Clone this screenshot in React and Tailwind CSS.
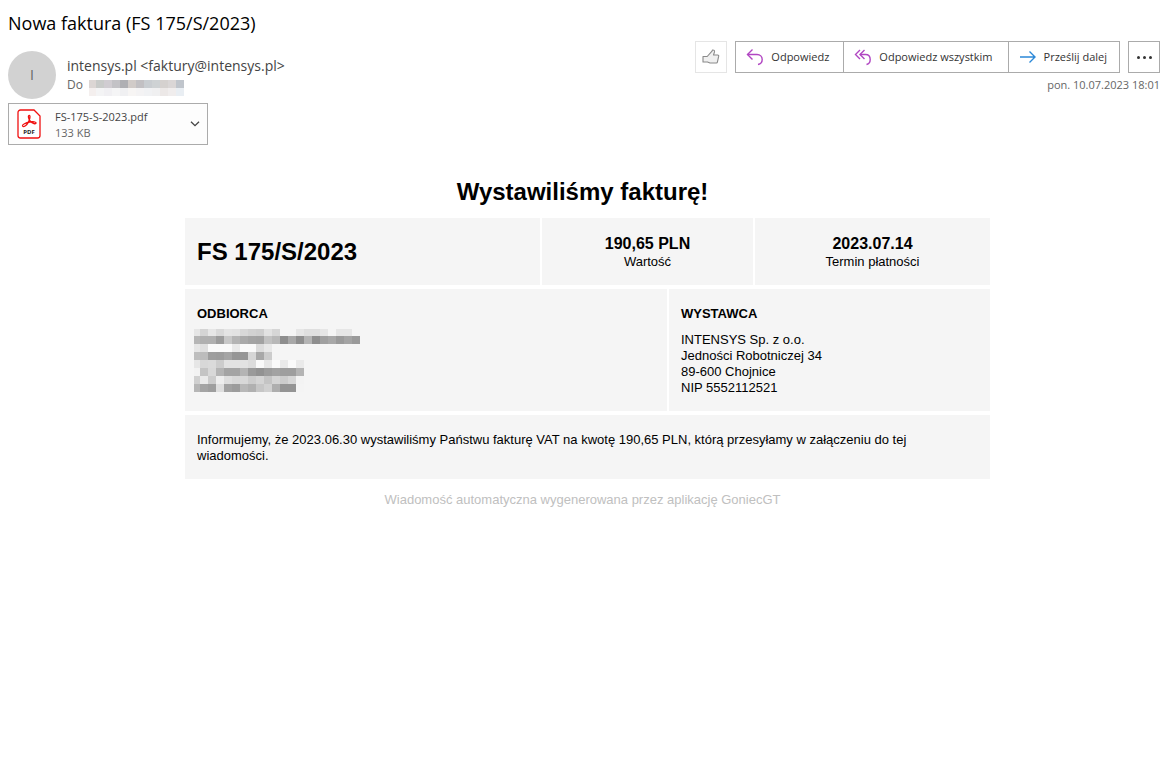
const SEGOE = "font-['Open_Sans','Noto_Sans',sans-serif]";
const ARIAL = "font-['Liberation_Sans',Arial,sans-serif]";

const SELLER = ['INTENSYS Sp. z o.o.', 'Jedności Robotniczej 34', '89-600 Chojnice', 'NIP 5552112521'];

// Blurred-out personal data: one string per row, two hex digits of grey per cell, ".." is empty.
const BUYER_MASK = [
  'e6d4e6d9e4e2d8d2cfe2d6....e6dfdfe6..e6e6..',
  'b6b0b09cc8b4aaa4a2c2b88ea88eb48ea0a89aa49a',
  'e6dffafafaeafafadce8......................',
  'bebc9e9ca49696d6a8cc......................',
  'e6d8dacce2e2e2dcfae8faeafaea..............',
  'f2c4d8b4a4a4b49a929ca29e9eb4..............',
  'd0eacceeded8d8ccd4c4d4ccd6f3..............',
  'b6a49edea29cb8b0c6d0ae9494f4..............',
];

const ADDRESS_MASK = [
  ['#dcd6d4', '#c9cbc9', '#d0ccd1', '#c3c2c6', '#afafb3', '#d1cbc8', '#c2c0c3', '#c9cdd1', '#ced2d4', '#d5d1cf', '#dad6d6', '#c0c5cc'],
  ['#f4efee', '#f4f4f5', '#f1f0f3', '#f5f5f6', '#f0f0f2', '#f7f5f4', '#f4f3f4', '#f1f2f4', '#f0f0f1', '#ece8e7', '#f0eded', '#e9eef3'],
];

function BuyerMask() {
  return (
    <svg width="168" height="63" viewBox="2 1 168 63" role="img" aria-label="Dane odbiorcy ukryte" shapeRendering="crispEdges">
      {BUYER_MASK.map((row, y) =>
        row.match(/../g).map((v, x) =>
          v === '..' ? null : (
            <rect key={`${x}-${y}`} x={x * 8} y={y * 8} width="8" height="8" fill={`#${v}${v}${v}`} />
          )
        )
      )}
    </svg>
  );
}

function AddressMask() {
  return (
    <svg width="95" height="16" viewBox="1 0 95 16" role="img" aria-label="Adres ukryty" shapeRendering="crispEdges">
      {ADDRESS_MASK.map((row, y) =>
        row.map((c, x) => <rect key={`${x}-${y}`} x={x * 8} y={y * 8} width="8" height="8" fill={c} />)
      )}
    </svg>
  );
}

function LikeIcon() {
  return (
    <svg width="18" height="18" viewBox="0 0 18 18" fill="#f0f0f0" stroke="#8a8a8a" strokeWidth="1.1" strokeLinejoin="round">
      <path d="M1 8.500h4.200L10 3.200l.5-1.200c1.500-.2 2.300.6 2 1.900l-1 3.100h4.200c.8 0 1.100.5 1 1.200l-1.300 6c-.1.500-.5.800-1 .8H8l-2.500-1H1z" />
    </svg>
  );
}

function ReplyIcon() {
  return (
    <svg width="18" height="18" viewBox="0 0 18 18" fill="none" stroke="#b146c2" strokeWidth="1.4">
      <path d="M6.5 1.5 1.5 6.5l5 5" />
      <path d="M1.500 6.500H11c3.200 0 5.200 2.200 5.200 5 0 2.500-1.600 4.500-4.200 5" />
    </svg>
  );
}

function ReplyAllIcon() {
  return (
    <svg width="18" height="18" viewBox="0 0 18 18" fill="none" stroke="#b146c2" strokeWidth="1.4">
      <path d="M6 2 1.500 6.500 6 11" />
      <path d="M10.500 2 6 6.500l4.500 4.500" />
      <path d="M6 6.500h5.500c2.900 0 4.700 2.200 4.700 5 0 2.500-1.400 4.500-3.700 5" />
    </svg>
  );
}

function ForwardIcon() {
  return (
    <svg width="18" height="18" viewBox="0 0 18 18" fill="none" stroke="#2b88d8" strokeWidth="1.4">
      <path d="M1 9h15M10.500 3.500 16 9l-5.500 5.500" />
    </svg>
  );
}

function PdfIcon() {
  return (
    <svg width="24" height="30" viewBox="0 0 24 30" fill="none">
      <path d="M3.500 1H17l6 6v19.500a2.500 2.500 0 0 1-2.500 2.500h-17A2.500 2.500 0 0 1 1 26.500v-23A2.500 2.500 0 0 1 3.500 1z" fill="#fff" stroke="#f01010" strokeWidth="1.3" />
      <path
        d="M5.600 17c-.8-1.400 3.400-3.300 7-4 3.500-.6 6.600-.3 6.500 1-.1 1.600-3.700.4-5.800-1.700-1.700-1.700-2.600-5.800-1.200-6 1.600-.2.800 4.300-1.100 7.600C9.400 16.600 6.600 18.600 5.600 17z"
        stroke="#f01010"
        strokeWidth="1.3"
      />
      <text x="12" y="25" textAnchor="middle" fontSize="6" fontWeight="700" fontFamily="Open Sans, sans-serif" fill="#222">PDF</text>
    </svg>
  );
}

function MailHeader() {
  return (
    <header className={`${SEGOE} pr-[7px]`}>
      <h1 className="text-lg leading-6 text-black pt-[11px]">Nowa faktura (FS 175/S/2023)</h1>

      <div className="flex justify-between items-start pt-1.5">
        <div className="flex items-center gap-[11px] pt-2.5">
          <div className="size-12 rounded-full bg-[#d2d2d2] text-[#666] text-sm flex items-center justify-center">I</div>
          <div>
            <p className="text-sm leading-5 text-[#444]">intensys.pl &lt;faktury@intensys.pl&gt;</p>
            <div className="flex items-start gap-1.5 h-[18px] text-xs leading-[18px] text-[#666]">
              <span>Do</span>
              <span className="pt-1">
                <AddressMask />
              </span>
            </div>
          </div>
        </div>

        <div>
          <div className="flex text-[11px] text-[#333]">
            <button type="button" aria-label="Lubię to" className="size-8 mr-2 border border-[#e5e5e5] flex items-center justify-center">
              <LikeIcon />
            </button>
            <button type="button" className="h-8 border border-[#ababab] pl-2.5 pr-3.5 flex items-center gap-[7px]">
              <ReplyIcon />
              Odpowiedz
            </button>
            <button type="button" className="h-8 border-y border-[#ababab] pl-2.5 pr-[15px] flex items-center gap-[7px]">
              <ReplyAllIcon />
              Odpowiedz wszystkim
            </button>
            <button type="button" className="h-8 border border-[#ababab] pl-2.5 pr-3 flex items-center gap-[7px]">
              <ForwardIcon />
              Prześlij dalej
            </button>
            <button type="button" aria-label="Więcej" className="size-8 ml-2 border border-[#ababab] flex items-center justify-center gap-[3px]">
              <span className="size-[3px] rounded-full bg-[#333]" />
              <span className="size-[3px] rounded-full bg-[#333]" />
              <span className="size-[3px] rounded-full bg-[#333]" />
            </button>
          </div>
          <p className="text-right text-[11px] leading-6 text-[#666]">pon. 10.07.2023 18:01</p>
        </div>
      </div>

      <button type="button" className="mt-1 w-[200px] h-[42px] border border-[#ababab] bg-[#fdfdfd] pl-2 pr-[7px] flex items-center text-left">
        <PdfIcon />
        <span className="ml-3.5 pt-0.5 flex-1 text-[11px] leading-4">
          <span className="block text-[#444]">FS-175-S-2023.pdf</span>
          <span className="block text-[#666]">133 KB</span>
        </span>
        <svg width="10" height="6" viewBox="0 0 10 6" fill="none" stroke="#444" strokeWidth="1.3">
          <path d="M1 .7 5 4.700 9 .7" />
        </svg>
      </button>
    </header>
  );
}

function InvoiceMessage() {
  return (
    <main className={`${ARIAL} text-black text-[13px] leading-4 mt-8`}>
      <h2 className="text-2xl leading-[30px] font-bold text-center pr-2.5">Wystawiliśmy fakturę!</h2>

      <div className="mt-[11px] mx-auto max-w-[805px] flex flex-col gap-1">
        <div className="grid grid-cols-[355fr_211fr_235fr] gap-0.5">
          <div className="bg-[#f5f5f5] px-3 flex items-center text-2xl font-bold h-[67px]">FS 175/S/2023</div>
          <div className="bg-[#f5f5f5] flex flex-col items-center justify-center">
            <strong className="text-base leading-5">190,65 PLN</strong>
            <span>Wartość</span>
          </div>
          <div className="bg-[#f5f5f5] flex flex-col items-center justify-center">
            <strong className="text-base leading-5">2023.07.14</strong>
            <span>Termin płatności</span>
          </div>
        </div>

        <div className="grid grid-cols-[482fr_321fr] gap-0.5">
          <section className="bg-[#f5f5f5] px-3 pt-[17px] pb-[15px]">
            <h3 className="font-bold">ODBIORCA</h3>
            <div className="mt-[7px] -ml-[3px]">
              <BuyerMask />
            </div>
          </section>
          <section className="bg-[#f5f5f5] px-3 pt-[17px] pb-[15px]">
            <h3 className="font-bold">WYSTAWCA</h3>
            <div className="mt-2.5">
              {SELLER.map((line) => (
                <p key={line}>{line}</p>
              ))}
            </div>
          </section>
        </div>

        <p className="bg-[#f5f5f5] pt-[17px] pb-[15px] pl-3 pr-10">
          Informujemy, że 2023.06.30 wystawiliśmy Państwu fakturę VAT na kwotę 190,65 PLN, którą przesyłamy w załączeniu do tej wiadomości.
        </p>
      </div>

      <p className="mt-[13px] text-center text-[#c0c0c0] pr-2.5">Wiadomość automatyczna wygenerowana przez aplikację GoniecGT</p>
    </main>
  );
}

export default function App() {
  return (
    <div className="min-h-screen bg-white pl-2 pr-1.5">
      <MailHeader />
      <InvoiceMessage />
    </div>
  );
}
